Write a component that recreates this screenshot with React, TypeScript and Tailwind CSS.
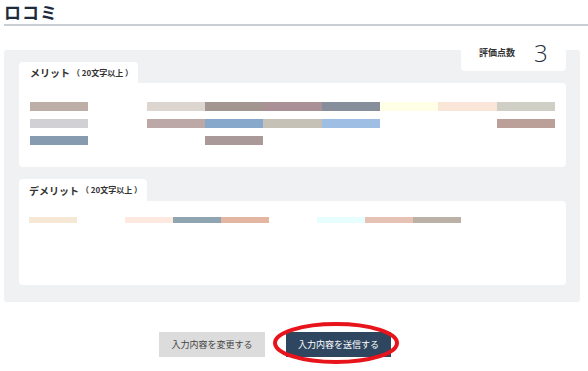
import React from "react";

const jp = { fontFamily: '"Noto Sans CJK JP", "Noto Sans", sans-serif' };

const meritRows: (string | null)[][] = [
  ["#bdaea7", null, "#ddd5cf", "#a39590", "#a99196", "#868e9b", "#ffffe6", "#fae5d9", "#cfcfc6"],
  ["#d1d1d5", null, "#bba8a7", "#88a8cb", "#c6c1b6", "#9ebfe3", null, null, "#bba09a"],
  ["#869ab0", null, null, "#a99999", null, null, null, null, null],
];

const demeritRow: (string | null)[] = [
  "#f7e8d5", null, "#fde9e0", "#8fa5b1", "#e2b6a0", null, "#e6fffe", "#e5c2b4", "#bbb1a7",
];

export default function App() {
  return (
    <div className="relative w-[588px] h-[371px] bg-white overflow-hidden" style={jp}>
      <div className="ml-[4px] h-[26px] border-b-2 border-[#c9ced4] flex items-start">
        <h1 className="text-[17px] leading-[24px] font-bold text-[#1e2b3c] tracking-[1px]">ロコミ</h1>
      </div>

      <div className="relative mt-[24px] ml-[4px] w-[576px] h-[252px] bg-[#f0f1f3] rounded-[3px] pt-[12px] pl-[15px] pr-[14px]">
        <div className="absolute left-[457px] top-[-15px] w-[105px] h-[36px] bg-white rounded-b-[4px] flex items-center">
          <span className="ml-[18px] text-[9px] font-bold text-[#333]">評価点数</span>
          <span
            className="ml-[19px] text-[24px] font-light text-[#1e2b3c] leading-none"
            style={{ fontFamily: '"Open Sans", "Noto Sans", sans-serif' }}
          >
            3
          </span>
        </div>

        <div className="flex flex-col">
          <div className="w-[119px] h-[21px] bg-white rounded-t-[4px] flex items-center pl-[11px] text-[#333]">
            <span className="text-[10px] font-bold">メリット</span>
            <span className="text-[8px] font-bold ml-[2px]">（ 20文字以上 ）</span>
          </div>
          <div className="w-[547px] h-[84px] bg-white rounded-b-[4px] rounded-tr-[4px] pt-[19px] pl-[11px]">
            <div className="grid grid-cols-[repeat(9,58.33px)] gap-y-[8px]">
              {meritRows.map((row, r) =>
                row.map((c, i) => (
                  <div key={`${r}-${i}`} className="h-[9px]" style={{ background: c ?? "transparent" }} />
                ))
              )}
            </div>
          </div>
        </div>

        <div className="flex flex-col mt-[12px]">
          <div className="w-[128px] h-[22px] bg-white rounded-t-[4px] flex items-center pl-[10px] text-[#333]">
            <span className="text-[10px] font-bold">デメリット</span>
            <span className="text-[8px] font-bold ml-[2px]">（ 20文字以上 ）</span>
          </div>
          <div className="w-[547px] h-[84px] bg-white rounded-b-[4px] rounded-tr-[4px] pt-[16px] pl-[10px]">
            <div className="grid grid-cols-[repeat(9,48px)]">
              {demeritRow.map((c, i) => (
                <div key={i} className="h-[6px]" style={{ background: c ?? "transparent" }} />
              ))}
            </div>
          </div>
        </div>
      </div>

      <div className="mt-[30px] ml-[159px] flex gap-[21px]">
        <button className="w-[106px] h-[25px] bg-[#dcdcdc] text-[#444] text-[9px] flex items-center justify-center">
          入力内容を変更する
        </button>
        <button className="w-[105px] h-[25px] bg-[#2e4660] text-white text-[9px] flex items-center justify-center">
          入力内容を送信する
        </button>
      </div>

      <svg className="absolute left-[271px] top-[321px]" width="130" height="44" viewBox="0 0 130 44">
        <ellipse cx="65" cy="22" rx="61" ry="19" fill="none" stroke="#e8141c" strokeWidth="4" />
      </svg>
    </div>
  );
}
